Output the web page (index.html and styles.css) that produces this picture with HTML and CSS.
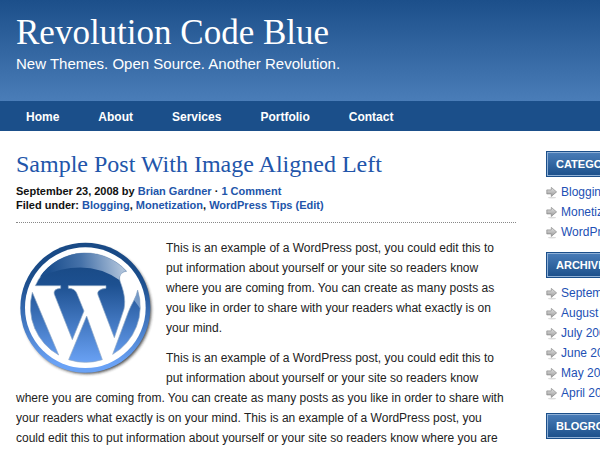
FILE: index.html
```html
<!DOCTYPE html>
<html lang="en">
<head>
<meta charset="utf-8">
<title>Revolution Code Blue</title>
<link rel="stylesheet" href="styles.css">
</head>
<body>
<svg class="defs" width="0" height="0" aria-hidden="true">
  <defs>
    <linearGradient id="arrow-fill" x1="0" y1="0" x2="0" y2="1">
      <stop offset="0" stop-color="#e4e4e4"/><stop offset="1" stop-color="#999"/>
    </linearGradient>
    <symbol id="arrow" viewBox="0 0 12 13">
      <ellipse cx="6" cy="11.6" rx="4" ry="0.9" fill="#dcdcdc"/>
      <path d="M0.8 3.9H5.3V1.4L10.6 5.9L5.3 10.4V7.9H0.8Z" fill="url(#arrow-fill)" stroke="#8a8a8a" stroke-width="0.7"/>
    </symbol>
  </defs>
</svg>
<header class="header">
  <h1 class="site-title">Revolution Code Blue</h1>
  <p class="tagline">New Themes. Open Source. Another Revolution.</p>
</header>
<nav class="nav">
  <a href="#">Home</a>
  <a href="#">About</a>
  <a href="#">Services</a>
  <a href="#">Portfolio</a>
  <a href="#">Contact</a>
</nav>
<div class="content">
  <main class="post">
    <h2 class="post-title"><a href="#">Sample Post With Image Aligned Left</a></h2>
    <p class="meta">September 23, 2008 by <a href="#">Brian Gardner</a> · <a href="#">1 Comment</a><br>Filed under: <a href="#">Blogging</a>, <a href="#">Monetization</a>, <a href="#">WordPress Tips</a> <a href="#">(Edit)</a></p>
    <div class="entry">
      <svg class="logo" viewBox="18 15 420 420" role="img" aria-label="WordPress">
        <defs>
          <linearGradient id="blue" gradientUnits="userSpaceOnUse" x1="0" y1="90" x2="0" y2="385">
            <stop offset="0" stop-color="#194a86"/><stop offset="0.2" stop-color="#1d5090"/><stop offset="1" stop-color="#6aa2f5"/>
          </linearGradient>
          <linearGradient id="gloss" gradientUnits="userSpaceOnUse" x1="120" y1="120" x2="335" y2="90">
            <stop offset="0" stop-color="#1c4f8e"/><stop offset="0.45" stop-color="#4672a9"/><stop offset="1" stop-color="#aec2da"/>
          </linearGradient>
          <filter id="soft" x="-10%" y="-10%" width="120%" height="120%"><feGaussianBlur stdDeviation="4"/></filter>
        </defs>
        <circle cx="231" cy="224" r="193" fill="#222" opacity="0.8" filter="url(#soft)"/>
        <circle cx="226" cy="218" r="195" fill="url(#blue)"/>
        <circle cx="226" cy="218" r="181" fill="#fff"/>
        <g fill="url(#blue)" stroke="#8fa9c6" stroke-width="2">
          <path d="M67 172L146 360A165 165 0 0 1 67 172Z"/>
          <path d="M230 243L277 374A165 165 0 0 1 176 374Z"/>
          <path d="M383 165A165 165 0 0 1 308 358L355 231C365 205 378 190 383 165Z"/>
          <path d="M76 152A165 165 0 0 1 350 109C332 111 326 124 330 138C340 165 348 192 342 222L313 308L264 180Q258 163 288 160V152H175V160Q194 160 200 174L222 228L187 314L133 178Q128 162 152 160V152Z"/>
        </g>
        <path d="M90 125A165 165 0 0 1 348 108Q328 112 328 135Q230 65 90 125Z" fill="url(#gloss)"/>
        <path d="M382 168Q390 190 390 220L372 195Q380 182 382 168Z" fill="#a9c1df" opacity="0.6"/>
      </svg>
      <p>This is an example of a WordPress post, you could edit this to put information about yourself or your site so readers know where you are coming from. You can create as many posts as you like in order to share with your readers what exactly is on your mind.</p>
      <p>This is an example of a WordPress post, you could edit this to put information about yourself or your site so readers know where you are coming from. You can create as many posts as you like in order to share with your readers what exactly is on your mind. This is an example of a WordPress post, you could edit this to put information about yourself or your site so readers know where you are</p>
    </div>
  </main>
  <aside class="sidebar">
    <h3>Categories</h3>
    <ul>
      <li><svg><use href="#arrow"/></svg><a href="#">Blogging</a></li>
      <li><svg><use href="#arrow"/></svg><a href="#">Monetization</a></li>
      <li><svg><use href="#arrow"/></svg><a href="#">WordPress Tips</a></li>
    </ul>
    <h3>Archives</h3>
    <ul>
      <li><svg><use href="#arrow"/></svg><a href="#">September 2008</a></li>
      <li><svg><use href="#arrow"/></svg><a href="#">August 2008</a></li>
      <li><svg><use href="#arrow"/></svg><a href="#">July 2008</a></li>
      <li><svg><use href="#arrow"/></svg><a href="#">June 2008</a></li>
      <li><svg><use href="#arrow"/></svg><a href="#">May 2008</a></li>
      <li><svg><use href="#arrow"/></svg><a href="#">April 2008</a></li>
    </ul>
    <h3>Blogroll</h3>
  </aside>
</div>
</body>
</html>
```

FILE: styles.css
```css
* { box-sizing: border-box; }
html { overflow: hidden; }
body {
  margin: 0;
  background: #fff;
  color: #222;
  font: 12px/20px "Liberation Sans", Arial, sans-serif;
}
h1, h2, h3, p, ul { margin: 0; padding: 0; font-weight: normal; }
a { color: #2255aa; text-decoration: none; }
.defs { position: absolute; }

.header {
  padding: 12px 16px 27px;
  color: #fff;
  background: linear-gradient(#1c4f8a, #4a7db8);
}
.site-title { font: 35px/42px "Liberation Serif", "Times New Roman", serif; }
.tagline { font-size: 15px; }

.nav {
  display: flex;
  gap: 39px;
  padding: 6px 26px 4px;
  background: #1b4f8a;
  font-weight: bold;
}
.nav a { color: #fff; }

.content {
  display: grid;
  grid-template-columns: minmax(500px, 1fr) 200px;
  gap: 30px;
  min-width: 760px;
  max-width: 960px;
  padding: 20px 16px;
}
.post-title { font: 24px/26px "Liberation Serif", "Times New Roman", serif; }
.meta {
  padding: 7px 0 10px;
  margin-bottom: 15px;
  border-bottom: 1px dotted #888;
  color: #111;
  font-size: 11px;
  line-height: 14px;
  font-weight: bold;
}
.entry { padding-right: 9px; }
.entry p { margin-bottom: 10px; }
.logo { float: left; width: 140px; height: 140px; margin: 2px 10px 5px 0; }

.sidebar h3 {
  height: 26px;
  padding: 0 9px;
  border: 1px solid #1b4f8a;
  outline: 1px solid #8fb0d6;
  outline-offset: -2px;
  background: linear-gradient(#4a7db8, #1b4f8a);
  color: #fff;
  font-size: 11px;
  line-height: 24px;
  font-weight: bold;
  text-transform: uppercase;
}
.sidebar ul { list-style: none; padding: 5px 0 10px; }
.sidebar li { display: flex; align-items: center; gap: 3px; }
.sidebar li svg { width: 12px; height: 13px; }
.sidebar li a { color: #2250b4; }
```
